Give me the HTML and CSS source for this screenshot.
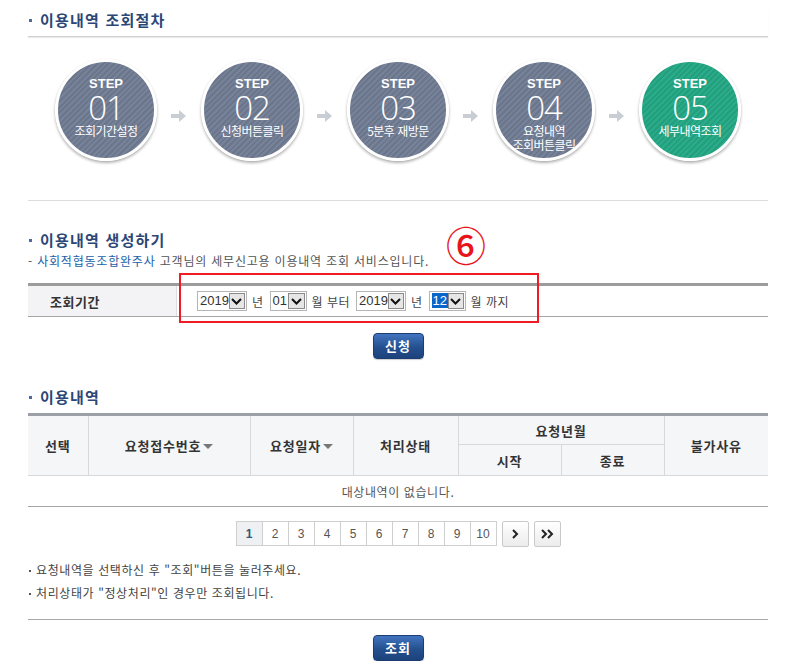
FILE: index.html
```html
<!DOCTYPE html>
<html lang="ko">
<head>
<meta charset="utf-8">
<title>이용내역 조회</title>
<link rel="stylesheet" href="styles.css">
</head>
<body>
<div class="page">
  <section class="sec sec-steps">
    <h2 class="sec-title">이용내역 조회절차</h2>
    <div class="steps">
      <div class="circle"><span class="s-step">STEP</span><span class="s-num">01</span><span class="s-label">조회기간설정</span></div>
      <div class="arrow"><svg width="16" height="14" viewBox="0 0 16 14"><path d="M0 5h8V1l7 6-7 6V9H0z" fill="#c9cdd4"/></svg></div>
      <div class="circle"><span class="s-step">STEP</span><span class="s-num">02</span><span class="s-label">신청버튼클릭</span></div>
      <div class="arrow"><svg width="16" height="14" viewBox="0 0 16 14"><path d="M0 5h8V1l7 6-7 6V9H0z" fill="#c9cdd4"/></svg></div>
      <div class="circle"><span class="s-step">STEP</span><span class="s-num">03</span><span class="s-label">5분후 재방문</span></div>
      <div class="arrow"><svg width="16" height="14" viewBox="0 0 16 14"><path d="M0 5h8V1l7 6-7 6V9H0z" fill="#c9cdd4"/></svg></div>
      <div class="circle"><span class="s-step">STEP</span><span class="s-num">04</span><span class="s-label">요청내역<br>조회버튼클릭</span></div>
      <div class="arrow"><svg width="16" height="14" viewBox="0 0 16 14"><path d="M0 5h8V1l7 6-7 6V9H0z" fill="#c9cdd4"/></svg></div>
      <div class="circle green"><span class="s-step">STEP</span><span class="s-num">05</span><span class="s-label">세부내역조회</span></div>
    </div>
  </section>

  <section class="sec-make">
    <h2 class="sec-title t2">이용내역 생성하기</h2>
    <p class="desc">- <span class="co">사회적협동조합완주사</span> 고객님의 세무신고용 이용내역 조회 서비스입니다.</p>
    <div class="form-wrap">
      <div class="form-row">
        <div class="f-label">조회기간</div>
        <div class="f-field">
          <span class="sel w50"><span class="val">2019</span><span class="dd"><svg width="11" height="7" viewBox="0 0 11 7"><path d="M1 1l4.5 4.5L10 1" fill="none" stroke="#111" stroke-width="2"/></svg></span></span>
          <span class="unit">년</span>
          <span class="sel w37"><span class="val">01</span><span class="dd"><svg width="11" height="7" viewBox="0 0 11 7"><path d="M1 1l4.5 4.5L10 1" fill="none" stroke="#111" stroke-width="2"/></svg></span></span>
          <span class="unit">월 부터</span>
          <span class="sel w50"><span class="val">2019</span><span class="dd"><svg width="11" height="7" viewBox="0 0 11 7"><path d="M1 1l4.5 4.5L10 1" fill="none" stroke="#111" stroke-width="2"/></svg></span></span>
          <span class="unit">년</span>
          <span class="sel w37"><span class="val"><span class="hl">12</span></span><span class="dd"><svg width="11" height="7" viewBox="0 0 11 7"><path d="M1 1l4.5 4.5L10 1" fill="none" stroke="#111" stroke-width="2"/></svg></span></span>
          <span class="unit">월 까지</span>
        </div>
      </div>
      <div class="red-box"></div>
      <div class="red-num">⑥</div>
    </div>
    <div class="btn-wrap"><button class="btn">신청</button></div>
  </section>

  <section class="sec-list">
    <h2 class="sec-title t3">이용내역</h2>
    <table class="list">
      <colgroup>
        <col style="width:60px"><col style="width:162px"><col style="width:103px"><col style="width:105px"><col style="width:103px"><col style="width:103px"><col style="width:104px">
      </colgroup>
      <thead>
        <tr class="h1">
          <th rowspan="2">선택</th>
          <th rowspan="2">요청접수번호<span class="sort"></span></th>
          <th rowspan="2">요청일자<span class="sort"></span></th>
          <th rowspan="2">처리상태</th>
          <th colspan="2">요청년월</th>
          <th rowspan="2" class="last">불가사유</th>
        </tr>
        <tr class="h2">
          <th>시작</th>
          <th>종료</th>
        </tr>
      </thead>
      <tbody>
        <tr><td colspan="7" class="empty">대상내역이 없습니다.</td></tr>
      </tbody>
    </table>

    <div class="paging">
      <span class="pg on">1</span><span class="pg">2</span><span class="pg">3</span><span class="pg">4</span><span class="pg">5</span><span class="pg">6</span><span class="pg">7</span><span class="pg">8</span><span class="pg">9</span><span class="pg">10</span>
      <span class="nav first"><svg width="8" height="10" viewBox="0 0 8 10"><path d="M2 1l4 4-4 4" fill="none" stroke="#222" stroke-width="2"/></svg></span>
      <span class="nav"><svg width="14" height="10" viewBox="0 0 14 10"><path d="M2 1l4 4-4 4M8 1l4 4-4 4" fill="none" stroke="#222" stroke-width="2"/></svg></span>
    </div>

    <ul class="notes">
      <li>요청내역을 선택하신 후 "조회"버튼을 눌러주세요.</li>
      <li>처리상태가 "정상처리"인 경우만 조회됩니다.</li>
    </ul>
    <div class="btn-wrap b2"><button class="btn">조회</button></div>
  </section>
</div>
</body>
</html>
```

FILE: styles.css
```css
* { box-sizing: border-box; }
html, body { margin: 0; padding: 0; background: #fff; }
body {
  width: 798px;
  font-family: "Noto Sans CJK KR", "Liberation Sans", sans-serif;
  font-size: 12px;
  color: #444;
}
.page { padding-left: 28px; width: 768px; }

.sec-title {
  margin: 0;
  position: relative;
  padding-left: 12px;
  font-size: 15px;
  line-height: 20px;
  font-weight: 700;
  color: #2b4776;
  letter-spacing: 1.2px;
}
.sec-title::before {
  content: "";
  position: absolute;
  left: 1px;
  top: 9px;
  width: 3px;
  height: 3px;
  background: #4d6b9c;
}

/* steps */
.sec-steps { padding-top: 10px; padding-bottom: 39px; border-bottom: 1px solid #dcdcdc; }
.sec-steps .sec-title { padding-bottom: 6px; border-bottom: 1px solid #cfcfcf; box-shadow: 0 1px 1px #ececec; }
.steps {
  display: flex;
  align-items: center;
  margin-top: 22px;
  padding-left: 27px;
}
.circle {
  width: 102px;
  height: 102px;
  flex: none;
  border-radius: 50%;
  border: 3px solid #fff;
  box-shadow: 0 2px 3px rgba(0,0,0,.3), 0 0 1px rgba(0,0,0,.15);
  background: repeating-linear-gradient(135deg, #6b768a 0 2px, #76819a 2px 4px);
  color: #fff;
  display: flex;
  flex-direction: column;
  align-items: center;
  padding-top: 15px;
  text-align: center;
}
.circle.green { background: repeating-linear-gradient(135deg, #22a07e 0 2px, #2cab8a 2px 4px); }
.s-step { font-family: "Liberation Sans", Arial, sans-serif; font-weight: 700; font-size: 13px; line-height: 14px; }
.s-num { font-family: "Open Sans", "Liberation Sans", sans-serif; font-weight: 300; font-size: 33px; line-height: 30px; margin-top: 2px; letter-spacing: -1px; }
.s-label { font-size: 12px; line-height: 14px; margin-top: 1px; letter-spacing: -0.5px; }
.arrow { width: 44px; flex: none; display: flex; justify-content: center; padding-top: 12px; }

/* make */
.sec-make { width: 740px; }
.t2 { margin-top: 29px; }
.desc { margin: 3px 0 0; font-size: 12px; line-height: 16px; color: #555; letter-spacing: 0.8px; }
.desc .co { color: #2260a8; }
.form-wrap { position: relative; margin-top: 14px; }
.form-row {
  display: flex;
  border-top: 3px solid #9c9c9c;
  border-bottom: 1px solid #a5a5a5;
  height: 34px;
}
.f-label {
  width: 149px;
  background: #f3f3f5;
  border-right: 1px solid #dcdcdc;
  padding-left: 22px;
  font-size: 13px;
  font-weight: 700;
  color: #333;
  display: flex;
  align-items: center;
  letter-spacing: 0.5px;
}
.f-field {
  display: flex;
  align-items: center;
  padding-left: 20px;
  gap: 5px;
}
.sel {
  display: inline-flex;
  align-items: center;
  height: 20px;
  border: 1px solid #b5b5b5;
  background: #fff;
  padding: 1px;
}
.sel .val { flex: 1; font-family: "Liberation Sans", Arial, sans-serif; font-size: 13px; line-height: 16px; color: #333; padding-left: 1px; }
.sel.w50 { width: 50px; }
.sel.w37 { width: 37px; }
.sel .dd {
  width: 17px;
  height: 16px;
  border: 1px solid #8a8a8a;
  background: #e6e6e6;
  display: flex;
  align-items: center;
  justify-content: center;
}
.hl { background: #0b66c9; color: #fff; padding: 0 1px; }
.unit { font-size: 12px; color: #444; margin-right: 1px; letter-spacing: 0.5px; }
.red-box {
  position: absolute;
  left: 151px;
  top: -10px;
  width: 360px;
  height: 50px;
  border: 2px solid #ef1c24;
}
.red-num {
  position: absolute;
  left: 418px;
  top: -61px;
  font-family: "Noto Sans CJK KR", sans-serif;
  font-size: 40px;
  font-weight: 500;
  line-height: 44px;
  color: #e8141c;
}

.btn-wrap { display: flex; justify-content: center; margin-top: 16px; }
.btn {
  width: 51px;
  height: 26px;
  border: 1px solid #1c3c74;
  border-radius: 4px;
  background: linear-gradient(#4274bf, #24508f 55%, #1d427c);
  color: #fff;
  font-family: "Noto Sans CJK KR", sans-serif;
  font-size: 13px;
  font-weight: 700;
  line-height: 22px;
  padding: 0;
  box-shadow: 0 1px 1px rgba(0,0,0,.2);
  letter-spacing: 1px;
}

/* list */
.sec-list { width: 740px; }
.t3 { margin-top: 28px; }
.list {
  margin-top: 6px;
  width: 740px;
  border-collapse: collapse;
  table-layout: fixed;
  border-top: 3px solid #9b9fa6;
}
.list th {
  background: #f5f6f8;
  border-right: 1px solid #d8d8d8;
  border-bottom: 1px solid #d8d8d8;
  font-size: 13px;
  font-weight: 700;
  color: #333;
  padding: 0;
  letter-spacing: 0.8px;
}
.list th.last { border-right: 0; }
.list .h1 th { height: 30px; }
.list .h2 th { height: 31px; }
.list thead tr.h1 th[rowspan] { height: 61px; }
.sort {
  display: inline-block;
  width: 0; height: 0;
  border-left: 5px solid transparent;
  border-right: 5px solid transparent;
  border-top: 5px solid #777;
  margin-left: 2px;
  vertical-align: 2px;
}
.list td.empty {
  height: 31px;
  text-align: center;
  font-size: 12px;
  color: #555;
  border-bottom: 1px solid #a5a5a5;
  letter-spacing: 0.6px;
}

.paging {
  display: flex;
  justify-content: center;
  margin-top: 14px;
  height: 26px;
}
.pg {
  width: 27px;
  height: 25px;
  border: 1px solid #cfcfcf;
  margin-left: -1px;
  display: flex;
  align-items: center;
  justify-content: center;
  font-family: "Liberation Sans", Arial, sans-serif;
  font-size: 12px;
  color: #555;
}
.pg:first-child { margin-left: 0; }
.pg.on { background: #eef0f3; color: #2b5a78; font-weight: 700; }
.nav {
  width: 27px;
  height: 26px;
  margin-left: 5px;
  border: 1px solid #c9c9c9;
  border-radius: 2px;
  background: linear-gradient(#fff, #ececec);
  display: flex;
  align-items: center;
  justify-content: center;
}
.nav.first { margin-left: 5px; }

.notes {
  list-style: none;
  margin: 13px 0 0;
  padding: 0 0 16px;
  border-bottom: 1px solid #a8a8a8;
}
.notes li {
  position: relative;
  padding-left: 8px;
  font-size: 12px;
  line-height: 20px;
  color: #444;
  letter-spacing: 0.6px;
}
.notes li + li { margin-top: 3px; }
.notes li::before {
  content: "";
  position: absolute;
  left: 1px;
  top: 10px;
  width: 2px;
  height: 2px;
  background: #555;
}
.b2 { margin-top: 15px; }
```
